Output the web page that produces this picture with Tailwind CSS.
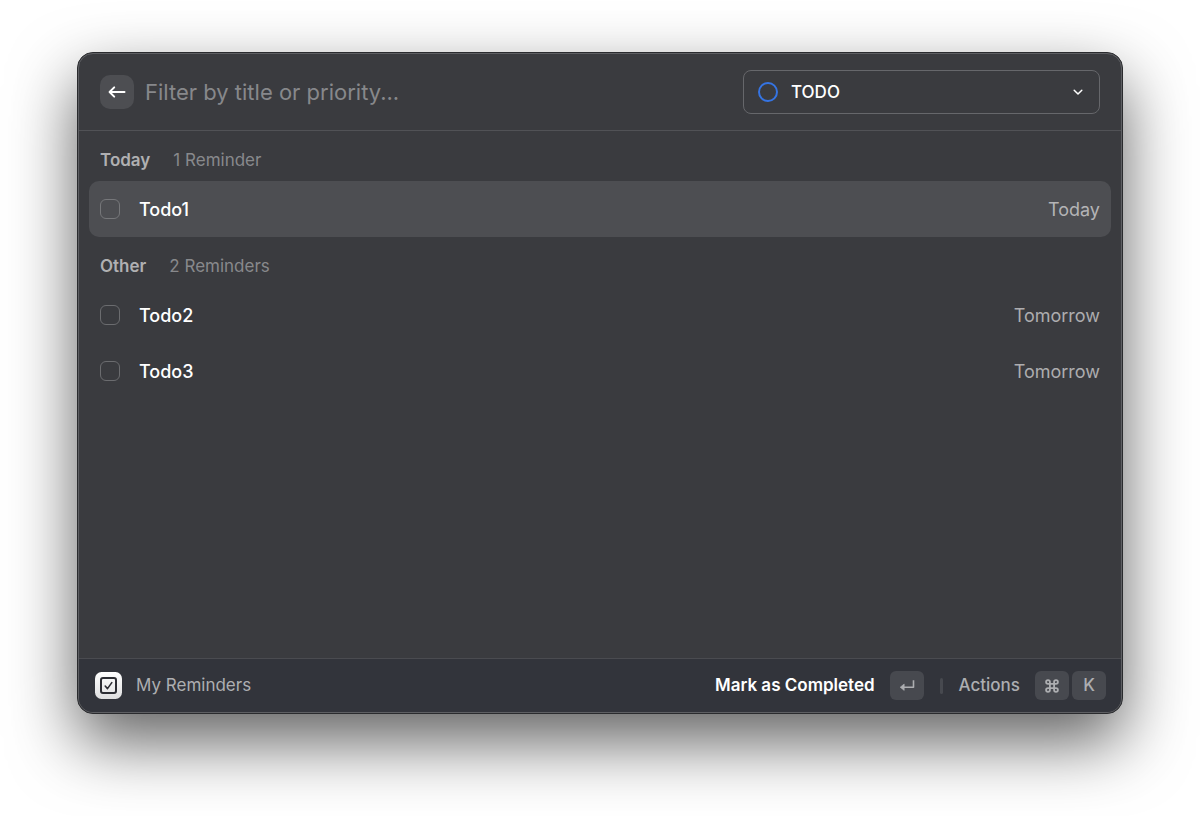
<!DOCTYPE html>
<html lang="en">
<head>
  <meta charset="UTF-8" />
  <meta name="viewport" content="width=device-width, initial-scale=1.0" />
  <title>My Reminders</title>
  <script src="https://cdn.jsdelivr.net/npm/@tailwindcss/browser@4"></script>
</head>
<body class="bg-white font-['Inter',sans-serif] text-lg antialiased">
  <div class="flex min-h-screen flex-col px-[77px] pt-[52px] pb-[102px]">
    <!-- Window -->
    <div class="flex flex-1 flex-col rounded-[16px] border border-[#2a2b2e] bg-[#3a3b3f] shadow-[0_28px_66px_rgba(0,0,0,0.62)]">
      <div class="flex flex-1 flex-col overflow-hidden rounded-[15px] border border-[#5e5f63]">

        <!-- Search bar -->
        <header class="flex h-[77px] items-center border-b border-[#515256] px-[21px]">
          <button type="button" aria-label="Back" class="flex size-[34px] shrink-0 items-center justify-center rounded-[10px] bg-[#4d4e52] text-white">
            <svg class="size-5" xmlns="http://www.w3.org/2000/svg" fill="none" viewBox="0 0 20 20" stroke="currentColor" stroke-width="2" stroke-linecap="round" stroke-linejoin="round">
              <path d="M17.5 10H2.8M7.2 5.4L2.6 10l4.6 4.6" />
            </svg>
          </button>
          <input type="text" aria-label="Filter reminders" placeholder="Filter by title or priority..." class="ml-[11px] min-w-0 flex-1 bg-transparent text-[22px] text-white outline-none placeholder:text-[#87888b]" />
          <div class="relative w-[357px]">
            <select aria-label="List" class="h-11 w-full appearance-none rounded-lg border border-[#66676b] bg-transparent pr-10 pl-[47px] text-[17px] font-medium text-white outline-none">
              <option>TODO</option>
            </select>
            <svg class="pointer-events-none absolute top-3 left-[15px] size-5" xmlns="http://www.w3.org/2000/svg" fill="none" viewBox="0 0 20 20" stroke="#3574e3" stroke-width="2">
              <circle cx="10" cy="10" r="9" />
            </svg>
            <svg class="pointer-events-none absolute top-4 right-4 size-3 text-white" xmlns="http://www.w3.org/2000/svg" fill="none" viewBox="0 0 12 12" stroke="currentColor" stroke-width="1.5" stroke-linecap="round" stroke-linejoin="round">
              <path d="M2.2 4.3L6 8l3.8-3.7" />
            </svg>
          </div>
        </header>

        <!-- Reminders -->
        <main class="flex-1 px-[10px]">
          <section>
            <div class="flex h-[50px] items-center gap-[23px] px-[11px] pt-2 text-[17px]">
              <h2 class="font-semibold text-[#b0b0b2]">Today</h2>
              <p class="text-[#88898c]">1 Reminder</p>
            </div>
            <ul>
              <li class="flex h-14 items-center rounded-[10px] bg-[#4d4e52] px-[11px]">
                <input type="checkbox" id="todo1" class="size-5 appearance-none rounded-md border border-[#76777a]" />
                <label for="todo1" class="flex-1 pt-px pl-[19px] font-medium text-white">Todo1</label>
                <span class="pt-px text-[#b4b4b6]">Today</span>
              </li>
            </ul>
          </section>
          <section>
            <div class="flex h-[50px] items-center gap-[23px] px-[11px] pt-2 text-[17px]">
              <h2 class="font-semibold text-[#b0b0b2]">Other</h2>
              <p class="text-[#88898c]">2 Reminders</p>
            </div>
            <ul>
              <li class="flex h-14 items-center rounded-[10px] px-[11px]">
                <input type="checkbox" id="todo2" class="size-5 appearance-none rounded-md border border-[#6b6c6f]" />
                <label for="todo2" class="flex-1 pt-px pl-[19px] font-medium text-white">Todo2</label>
                <span class="pt-px text-[#adadaf]">Tomorrow</span>
              </li>
              <li class="flex h-14 items-center rounded-[10px] px-[11px]">
                <input type="checkbox" id="todo3" class="size-5 appearance-none rounded-md border border-[#6b6c6f]" />
                <label for="todo3" class="flex-1 pt-px pl-[19px] font-medium text-white">Todo3</label>
                <span class="pt-px text-[#adadaf]">Tomorrow</span>
              </li>
            </ul>
          </section>
        </main>

        <!-- Action bar -->
        <footer class="flex h-[54px] items-center border-t border-[#4a4b50] bg-[#32343b] pr-[15px] pl-4 text-[17px]">
          <svg class="size-[27px]" xmlns="http://www.w3.org/2000/svg" viewBox="0 0 27 27" fill="none" stroke-linecap="round" stroke-linejoin="round">
            <defs>
              <linearGradient id="appIcon" x1="0" y1="0" x2="0" y2="1">
                <stop offset="0" stop-color="#ffffff" />
                <stop offset="1" stop-color="#dededf" />
              </linearGradient>
            </defs>
            <rect width="27" height="27" rx="6.5" fill="url(#appIcon)" />
            <rect x="6" y="6" width="15" height="15" rx="2" stroke="#2c2d33" stroke-width="2" />
            <path d="M10.2 14l2.3 2.6 4.3-6" stroke="#2c2d33" stroke-width="1.6" />
          </svg>
          <span class="ml-[14px] flex-1 text-[#adaeb1]">My Reminders</span>
          <button type="button" class="flex items-center gap-[15px] font-semibold text-white">
            Mark as Completed
            <kbd class="flex h-[29px] w-[34px] items-center justify-center rounded-md bg-[#47494f] text-[#adaeb1]">
              <svg class="size-4" xmlns="http://www.w3.org/2000/svg" viewBox="0 0 16 16" fill="none" stroke="currentColor" stroke-width="1.6" stroke-linejoin="round">
                <path d="M14.5 2.3v6.9H4" />
                <path d="M5.2 6v6.4L1.2 9.2z" fill="currentColor" stroke-width="0.6" />
              </svg>
            </kbd>
          </button>
          <span class="mx-4 h-4 w-[3px] rounded-full bg-[#47494f]"></span>
          <button type="button" class="flex items-center font-medium text-[#adaeb1]">
            Actions
            <kbd class="ml-[15px] flex h-[29px] w-[34px] items-center justify-center rounded-md bg-[#47494f]">
              <svg class="size-4" xmlns="http://www.w3.org/2000/svg" viewBox="0 0 16 16" fill="none" stroke="currentColor" stroke-width="1.8">
                <path d="M5.9 5.9V4a1.9 1.9 0 1 0-1.9 1.9h8a1.9 1.9 0 1 0-1.9-1.9v8a1.9 1.9 0 1 0 1.9-1.9H4a1.9 1.9 0 1 0 1.9 1.9z" />
              </svg>
            </kbd>
            <kbd class="ml-[3px] flex h-[29px] w-[34px] items-center justify-center rounded-md bg-[#47494f] font-['Inter',sans-serif] text-[17px]">K</kbd>
          </button>
        </footer>
      </div>
    </div>
  </div>
</body>
</html>
